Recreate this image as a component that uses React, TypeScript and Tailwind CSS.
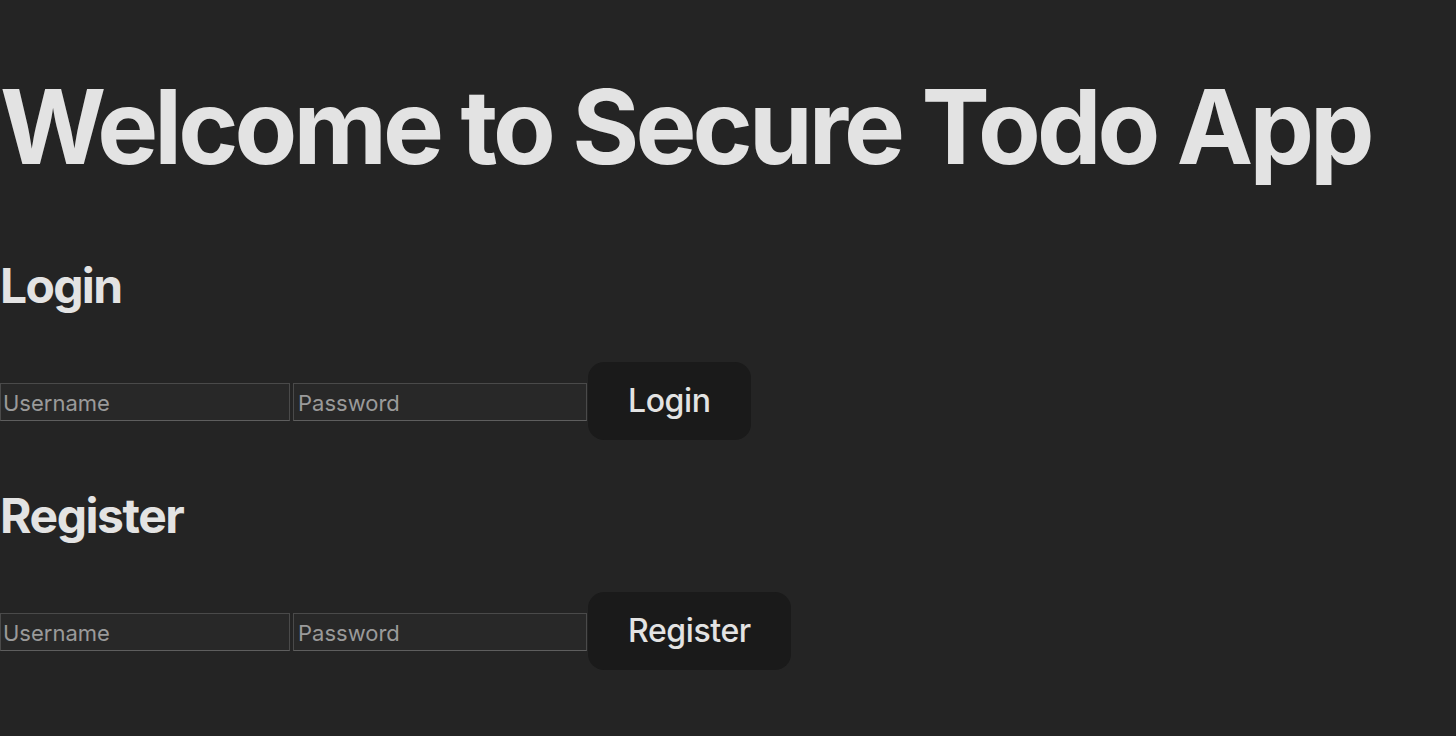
import { useState } from 'react';

function AuthForm({ label }: { label: string }) {
  const [username, setUsername] = useState('');
  const [password, setPassword] = useState('');

  return (
    <form
      onSubmit={(e) => e.preventDefault()}
      className="flex items-center"
    >
      <input
        type="text"
        placeholder="Username"
        value={username}
        onChange={(e) => setUsername(e.target.value)}
        className="mt-[2px] w-[290px] h-[38px] pl-[2px] pt-[3px] bg-[#282828] border border-[#4a4a4a] border-b-[#5e5e5e] text-[22px] text-[#e3e3e3] placeholder:text-[#9a9a9a] outline-none"
      />
      <input
        type="password"
        placeholder="Password"
        value={password}
        onChange={(e) => setPassword(e.target.value)}
        className="mt-[2px] ml-[3px] w-[294px] h-[38px] pl-[4px] pt-[3px] bg-[#282828] border border-[#4a4a4a] border-b-[#5e5e5e] text-[22px] text-[#e3e3e3] placeholder:text-[#9a9a9a] outline-none"
      />
      <button
        type="submit"
        className="ml-[1px] h-[78px] px-[38px] rounded-[16px] bg-[#1a1a1a] border-2 border-transparent text-[32px] font-medium tracking-[-0.4px] text-[#e3e3e3] hover:border-[#646cff] transition-colors"
      >
        {label}
      </button>
    </form>
  );
}

export default function App() {
  return (
    <div className="min-h-screen bg-[#242424] text-[#e3e3e3] font-['Inter',sans-serif] leading-[1.5] overflow-hidden">
      <h1 className="pt-[71px] mb-[66px] text-[102.4px] leading-[1.1] font-bold tracking-[-0.038em] whitespace-nowrap">
        Welcome to Secure Todo App
      </h1>

      <h2 className="text-[48px] font-bold tracking-[-0.035em] mb-[40px]">Login</h2>
      <AuthForm label="Login" />

      <h2 className="mt-[40px] text-[48px] font-bold tracking-[-0.03em] mb-[40px]">Register</h2>
      <AuthForm label="Register" />
    </div>
  );
}
